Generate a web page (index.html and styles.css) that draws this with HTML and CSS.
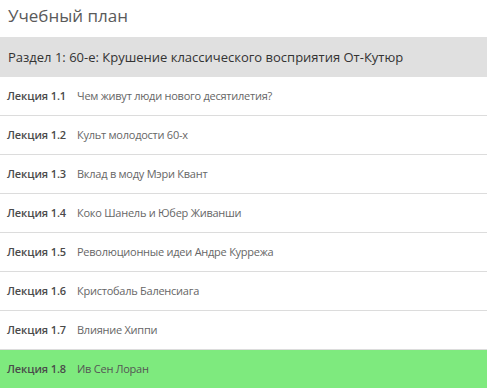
FILE: index.html
```html
<!DOCTYPE html>
<html lang="ru">
<head>
<meta charset="utf-8">
<link rel="stylesheet" href="styles.css">
</head>
<body>
<div class="plan">
  <h2 class="plan-title">Учебный план</h2>
  <div class="section">Раздел 1: 60-е: Крушение классического восприятия От-Кутюр</div>
  <ul class="lessons">
    <li class="lesson"><span class="num">Лекция 1.1</span><span class="name">Чем живут люди нового десятилетия?</span></li>
    <li class="lesson"><span class="num">Лекция 1.2</span><span class="name">Культ молодости 60-х</span></li>
    <li class="lesson"><span class="num">Лекция 1.3</span><span class="name">Вклад в моду Мэри Квант</span></li>
    <li class="lesson"><span class="num">Лекция 1.4</span><span class="name">Коко Шанель и Юбер Живанши</span></li>
    <li class="lesson"><span class="num">Лекция 1.5</span><span class="name">Революционные идеи Андре Куррежа</span></li>
    <li class="lesson"><span class="num">Лекция 1.6</span><span class="name">Кристобаль Баленсиага</span></li>
    <li class="lesson"><span class="num">Лекция 1.7</span><span class="name">Влияние Хиппи</span></li>
    <li class="lesson active"><span class="num">Лекция 1.8</span><span class="name">Ив Сен Лоран</span></li>
  </ul>
</div>
</body>
</html>
```
FILE: styles.css
```css
html, body {
  margin: 0;
  padding: 0;
  background: #fff;
}
body {
  font-family: "Open Sans", "Noto Sans", sans-serif;
  color: #444;
}
.plan {
  width: 487px;
}
.plan-title {
  margin: 0;
  height: 37px;
  box-sizing: border-box;
  padding: 3px 8px 0;
  font-size: 17px;
  font-weight: 400;
  line-height: 26px;
  color: #5a5a5a;
}
.section {
  height: 40px;
  background: #e0e0e0;
  display: flex;
  align-items: center;
  padding: 0 8px;
  font-size: 13px;
  color: #333;
}
.lessons {
  list-style: none;
  margin: 0;
  padding: 0;
}
.lesson {
  height: 38px;
  border-bottom: 1px solid #dcdcdc;
  display: flex;
  align-items: center;
  padding: 0 7px 2px;
  box-sizing: border-box;
  height: 39px;
  font-size: 11px;
}
.lesson.active {
  background: #7eea7e;
  border-bottom: none;
}
.num {
  width: 70px;
  flex: none;
  font-weight: 600;
  color: #4a4a4a;
  letter-spacing: -0.1px;
}
.name {
  color: #666;
  letter-spacing: -0.25px;
}
.active .name {
  color: #555;
}
```
